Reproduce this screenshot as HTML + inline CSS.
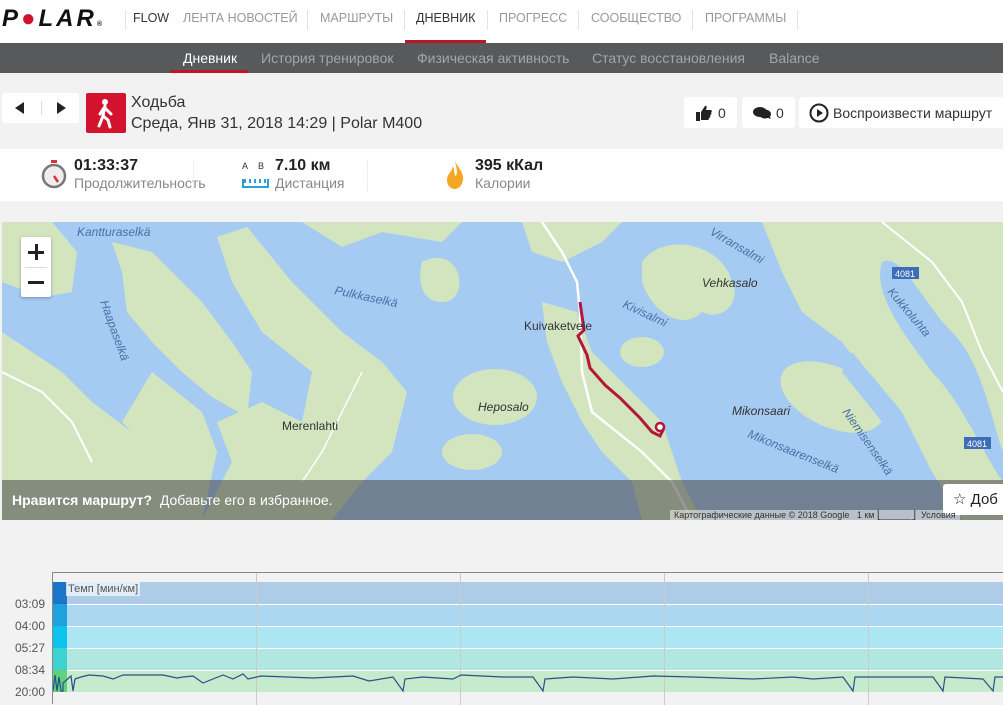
<!DOCTYPE html>
<html><head><meta charset="utf-8"><style>
*{margin:0;padding:0;box-sizing:border-box}
body{width:1003px;height:704px;overflow:hidden;background:#f2f2f2;font-family:"Liberation Sans",sans-serif;position:relative}
.top{position:absolute;left:0;top:0;width:1003px;height:43px;background:#fff}
.top .it{position:absolute;top:11px;font-size:12.5px;color:#999}
.sep{position:absolute;top:10px;width:1px;height:20px;background:#e4e4e4}
.sub{position:absolute;left:0;top:43px;width:1003px;height:30px;background:#58595b}
.sub span{position:absolute;top:7px;font-size:14px;color:#a5a5a5}
.abs{position:absolute}
.btn{position:absolute;background:#fff;border-radius:3px}
.stats{position:absolute;left:0;top:149px;width:1003px;height:52px;background:#fff}
.big{font-size:16px;font-weight:bold;color:#222}
.lbl{font-size:14px;color:#888}
</style></head><body>
<div class="top">
 <div class="abs" style="left:2px;top:5px;font-size:24px;font-weight:900;font-style:italic;color:#111;letter-spacing:3px">P<span style="color:#d0112b">●</span>LAR<span style="font-size:7px;letter-spacing:0">®</span></div>
 <div class="sep" style="left:125px"></div>
 <div class="it" style="left:133px;color:#333">FLOW</div>
 <div class="it" style="left:183px">ЛЕНТА НОВОСТЕЙ</div>
 <div class="sep" style="left:307px"></div>
 <div class="it" style="left:320px">МАРШРУТЫ</div>
 <div class="sep" style="left:404px"></div>
 <div class="it" style="left:416px;color:#333">ДНЕВНИК</div>
 <div class="abs" style="left:405px;top:40px;width:81px;height:3px;background:#c0142d"></div>
 <div class="sep" style="left:487px"></div>
 <div class="it" style="left:499px">ПРОГРЕСС</div>
 <div class="sep" style="left:578px"></div>
 <div class="it" style="left:591px">СООБЩЕСТВО</div>
 <div class="sep" style="left:692px"></div>
 <div class="it" style="left:705px">ПРОГРАММЫ</div>
 <div class="sep" style="left:797px"></div>
</div>
<div class="sub">
 <span style="left:183px;color:#fff">Дневник</span>
 <div class="abs" style="left:170px;top:27px;width:78px;height:3px;background:#c0142d"></div>
 <span style="left:261px">История тренировок</span>
 <span style="left:417px">Физическая активность</span>
 <span style="left:592px">Статус восстановления</span>
 <span style="left:769px">Balance</span>
</div>
<div class="btn" style="left:2px;top:93px;width:77px;height:30px">
 <div class="abs" style="left:13px;top:9px;width:0;height:0;border-top:6px solid transparent;border-bottom:6px solid transparent;border-right:9px solid #222"></div>
 <div class="abs" style="left:39px;top:8px;width:1px;height:14px;background:#ddd"></div>
 <div class="abs" style="left:55px;top:9px;width:0;height:0;border-top:6px solid transparent;border-bottom:6px solid transparent;border-left:9px solid #222"></div>
</div>
<div class="abs" style="left:86px;top:93px;width:40px;height:40px;background:#d3132d;border-radius:2px">
 <svg width="40" height="40" viewBox="0 0 40 40"><circle cx="19" cy="9" r="3" fill="#fff"/><path d="M19 13 L17 23 L13 33 M17 23 L22 27 L24 34 M18 15 L14 21 M19 15 L25 21" stroke="#fff" stroke-width="3" fill="none" stroke-linecap="round"/></svg>
</div>
<div class="abs" style="left:131px;top:94px;font-size:16px;color:#333">Ходьба</div>
<div class="abs" style="left:131px;top:115px;font-size:16px;color:#333">Среда, Янв 31, 2018 14:29 | Polar M400</div>
<div class="btn" style="left:684px;top:97px;width:53px;height:31px">
 <svg class="abs" style="left:11px;top:7px" width="18" height="17" viewBox="0 0 18 17"><path d="M1 8h4v9H1z M6 8 L10 2 C12 1 12 3 11 6 H16 C17 6 17 8 16 9 C17 10 16 11 15 11 C16 12 15 14 14 14 C14 16 13 16 12 16 H6z" fill="#222"/></svg>
 <span class="abs" style="left:34px;top:8px;font-size:14px;color:#333">0</span></div>
<div class="btn" style="left:742px;top:97px;width:53px;height:31px">
 <svg class="abs" style="left:10px;top:9px" width="20" height="14" viewBox="0 0 20 14"><ellipse cx="8" cy="6" rx="7" ry="5" fill="#222"/><ellipse cx="13" cy="8" rx="6" ry="4.5" fill="#222"/><path d="M14 11 L19 13 L17 9z" fill="#222"/></svg>
 <span class="abs" style="left:34px;top:8px;font-size:14px;color:#333">0</span></div>
<div class="btn" style="left:799px;top:97px;width:204px;height:31px">
 <svg class="abs" style="left:10px;top:6px" width="20" height="20" viewBox="0 0 20 20"><circle cx="10" cy="10" r="8.5" stroke="#222" stroke-width="2" fill="none"/><path d="M8 6 L14 10 L8 14z" fill="#222"/></svg>
 <span class="abs" style="left:34px;top:8px;font-size:14px;color:#333">Воспроизвести маршрут</span></div>
<div class="stats">
 <svg class="abs" style="left:40px;top:10px" width="28" height="30" viewBox="0 0 28 30"><rect x="11" y="1" width="6" height="3" fill="#d33"/><circle cx="14" cy="17" r="11" fill="#eee" stroke="#777" stroke-width="2.5"/><path d="M14 17 L18 23" stroke="#d33" stroke-width="2.5"/></svg>
 <div class="abs big" style="left:74px;top:8px">01:33:37</div>
 <div class="abs lbl" style="left:74px;top:26px">Продолжительность</div>
 <div class="abs" style="left:193px;top:12px;width:1px;height:30px;background:#eee"></div>
 <div class="abs" style="left:242px;top:12px;font-size:9px;color:#333">A&nbsp;&nbsp;&nbsp;&nbsp;B</div>
 <div class="abs" style="left:242px;top:30px;width:27px;height:9px;border:2px solid #2a9fd8;border-top:none;background:repeating-linear-gradient(90deg,#2a9fd8 0 2px,transparent 2px 5px) top/100% 4px no-repeat"></div>
 <div class="abs big" style="left:275px;top:8px">7.10 км</div>
 <div class="abs lbl" style="left:275px;top:26px">Дистанция</div>
 <div class="abs" style="left:367px;top:12px;width:1px;height:30px;background:#eee"></div>
 <svg class="abs" style="left:444px;top:11px" width="22" height="30" viewBox="0 0 22 30"><path d="M11 1 C14 8 20 12 19 20 C18 27 13 29 11 29 C7 29 3 26 3 20 C3 14 8 12 9 6 C11 10 9 14 12 16 C14 12 12 6 11 1z" fill="#f5a623"/></svg>
 <div class="abs big" style="left:475px;top:8px">395 кКал</div>
 <div class="abs lbl" style="left:475px;top:26px">Калории</div>
</div>
<div class="abs" style="left:2px;top:222px;width:1001px;height:298px;overflow:hidden;background:#a6cbf2">
<svg width="1001" height="298" viewBox="0 0 1001 298">
<g fill="#d2e5bf">
<path d="M0 0 H50 L75 30 L70 70 L40 75 L0 60z"/>
<path d="M0 110 L30 130 L60 150 L90 180 L130 210 L170 240 L200 298 H0z"/>
<path d="M110 20 L150 30 L200 80 L230 120 L250 150 L245 195 L210 175 L180 150 L150 120 L125 90 L120 50z"/>
<path d="M215 15 L245 5 L290 60 L340 110 L380 140 L405 170 L390 230 L360 260 L330 298 H200 L230 240 L215 200 L260 180 L300 200 L310 150 L260 110 L230 60z"/>
<path d="M150 150 L200 190 L215 230 L200 298 L180 298 L150 230 L120 200z"/>
<path d="M300 0 H460 L440 20 L380 10 L340 25z"/>
<path d="M420 40 C460 20 470 80 440 80 C420 80 415 60 420 40z"/>
<ellipse cx="493" cy="175" rx="42" ry="28"/>
<ellipse cx="470" cy="230" rx="30" ry="18"/>
<path d="M520 0 H620 L600 20 L560 40 L530 30z"/>
<path d="M540 80 L575 90 L590 130 L620 160 L660 200 L680 260 L700 298 H640 L630 260 L600 230 L580 200 L560 160 L545 120z"/>
<ellipse cx="640" cy="130" rx="22" ry="15"/>
<path d="M640 40 C660 10 720 20 730 60 C740 80 720 100 700 90 C680 110 650 90 640 60z"/>
<ellipse cx="830" cy="175" rx="55" ry="30" transform="rotate(25 830 175)"/>
<path d="M760 0 H1001 V298 H960 L930 250 L900 200 L870 160 L840 120 L800 90 L780 50z"/>
</g>
<g fill="#a6cbf2">
<path d="M880 40 C900 30 920 80 950 110 C980 140 990 200 1001 230 V260 C980 230 960 180 930 150 C900 110 870 70 880 40z"/>
<path d="M850 130 L900 190 L930 250 L915 260 L880 200 L840 150z"/>
</g>
<path d="M540 0 L560 30 L575 60 L578 90 L580 150 L590 190 L640 230 L670 260 L690 298" stroke="#fff" stroke-width="2.5" fill="none"/>
<path d="M880 0 L930 40 L960 80 L980 130 L1001 170" stroke="#fff" stroke-width="2" fill="none"/>
<path d="M0 150 L40 170 L70 200 L90 240" stroke="#fff" stroke-width="2" fill="none"/>
<path d="M360 150 L340 190 L320 230 L300 260" stroke="#fff" stroke-width="1.5" fill="none"/>
<polyline points="578,80 582,108 576,114 585,133 588,146 603,163 618,176 638,196 650,210 658,214 662,206" stroke="#b5173a" stroke-width="3" fill="none"/>
<circle cx="658" cy="205" r="4" fill="#fff" stroke="#b5173a" stroke-width="2.5"/>
<g font-family="Liberation Sans" font-size="12" fill="#4a6fa5" font-style="italic">
<text x="75" y="14">Kantturaselkä</text>
<text x="332" y="72" transform="rotate(12 332 72)">Pulkkaselkä</text>
<text x="620" y="85" transform="rotate(25 620 85)">Kivisalmi</text>
<text x="707" y="12" transform="rotate(30 707 12)">Virransalmi</text>
<text x="885" y="70" transform="rotate(50 885 70)">Kukkoluhta</text>
<text x="98" y="80" transform="rotate(70 98 80)">Haapaselkä</text>
<text x="840" y="190" transform="rotate(55 840 190)">Niemisenselkä</text>
<text x="745" y="215" transform="rotate(22 745 215)">Mikonsaarenselkä</text>
</g>
<g font-family="Liberation Sans" font-size="12" fill="#333">
<text x="700" y="65" font-style="italic">Vehkasalo</text>
<text x="522" y="108">Kuivaketvele</text>
<text x="476" y="189" font-style="italic">Heposalo</text>
<text x="730" y="193" font-style="italic">Mikonsaari</text>
<text x="280" y="208">Merenlahti</text>
</g>
<rect x="890" y="45" width="27" height="12" fill="#3d6db5"/><text x="893" y="55" font-size="9" fill="#fff" font-family="Liberation Sans">4081</text>
<rect x="962" y="215" width="27" height="12" fill="#3d6db5"/><text x="965" y="225" font-size="9" fill="#fff" font-family="Liberation Sans">4081</text>
</svg>
<div class="abs" style="left:19px;top:15px;width:30px;height:60px;background:#fff;border-radius:2px;box-shadow:0 1px 3px rgba(0,0,0,.3)">
 <div class="abs" style="left:7px;top:14px;width:16px;height:3px;background:#222"></div><div class="abs" style="left:14px;top:7px;width:3px;height:16px;background:#222"></div>
 <div class="abs" style="left:4px;top:30px;width:22px;height:1px;background:#ddd"></div>
 <div class="abs" style="left:7px;top:44px;width:16px;height:3px;background:#222"></div>
</div>
<div class="abs" style="left:0;top:258px;width:1001px;height:40px;background:rgba(70,70,70,.55)"></div>
<div class="abs" style="left:10px;top:270px;font-size:14px;color:#fff"><b>Нравится маршрут?</b>&nbsp;&nbsp;Добавьте его в избранное.</div>
<div class="abs" style="left:941px;top:262px;width:70px;height:31px;background:#fff;border-radius:3px;font-size:15px;color:#222;padding:6px 0 0 10px">☆ Доб</div>
<div class="abs" style="left:668px;top:288px;font-size:9px;color:#333;background:rgba(255,255,255,.5);padding:0 4px">Картографические данные © 2018 Google &nbsp; 1 км ⎣______⎦ &nbsp;Условия</div>
</div>
<div class="abs" style="left:52px;top:572px;width:951px;height:132px;border-left:1px solid #888;border-top:1px solid #888;background:#f2f2f2">
 <div class="abs" style="left:0;top:9px;width:951px;height:22px;background:#aecbe8"></div>
 <div class="abs" style="left:0;top:31px;width:951px;height:22px;background:#abd8f0"></div>
 <div class="abs" style="left:0;top:53px;width:951px;height:22px;background:#ade6f3"></div>
 <div class="abs" style="left:0;top:75px;width:951px;height:22px;background:#b2e6e0"></div>
 <div class="abs" style="left:0;top:97px;width:951px;height:22px;background:#c5ebcc"></div>
 <div class="abs" style="left:0;top:31px;width:951px;height:1px;background:#fff"></div>
 <div class="abs" style="left:0;top:53px;width:951px;height:1px;background:#fff"></div>
 <div class="abs" style="left:0;top:75px;width:951px;height:1px;background:#fff"></div>
 <div class="abs" style="left:0;top:97px;width:951px;height:1px;background:#fff"></div>
 <div class="abs" style="left:0;top:9px;width:14px;height:22px;background:#1c74c9"></div>
 <div class="abs" style="left:0;top:31px;width:14px;height:22px;background:#1fa1df"></div>
 <div class="abs" style="left:0;top:53px;width:14px;height:22px;background:#0fc3f1"></div>
 <div class="abs" style="left:0;top:75px;width:14px;height:22px;background:#3bd2d0"></div>
 <div class="abs" style="left:0;top:97px;width:14px;height:22px;background:#5ed27e"></div>
 <div class="abs" style="left:203px;top:0;width:1px;height:132px;background:#ccc"></div>
 <div class="abs" style="left:407px;top:0;width:1px;height:132px;background:#ccc"></div>
 <div class="abs" style="left:611px;top:0;width:1px;height:132px;background:#ccc"></div>
 <div class="abs" style="left:815px;top:0;width:1px;height:132px;background:#ccc"></div>
 <div class="abs" style="left:13px;top:9px;font-size:11px;color:#555;background:rgba(240,245,250,.8);padding:1px 2px">Темп [мин/км]</div>
 <svg class="abs" style="left:0;top:0" width="951" height="132" viewBox="0 0 951 132"><polyline points="0,118 2,102 4,118 6,104 8,118 10,118 10,110 18,103 20,118 22,106 28,104 36,102 50,103 60,106 70,102 110,102 124,105 130,104 140,103 150,110 170,102 180,106 190,101 195,106 208,103 260,105 300,103 316,108 340,104 350,118 352,106 370,104 400,106 408,102 450,104 480,104 490,118 492,106 520,104 560,106 600,103 640,104 700,106 740,104 760,106 790,104 800,118 802,104 830,104 860,104 880,104 890,118 892,104 930,106 940,118 942,104 951,104" stroke="#2a4f8a" stroke-width="1.2" fill="none"/></svg>
</div>
<div class="abs" style="left:15px;top:593px;font-size:12px;color:#555;line-height:22px">03:09<br>04:00<br>05:27<br>08:34<br>20:00</div>
</body></html>
